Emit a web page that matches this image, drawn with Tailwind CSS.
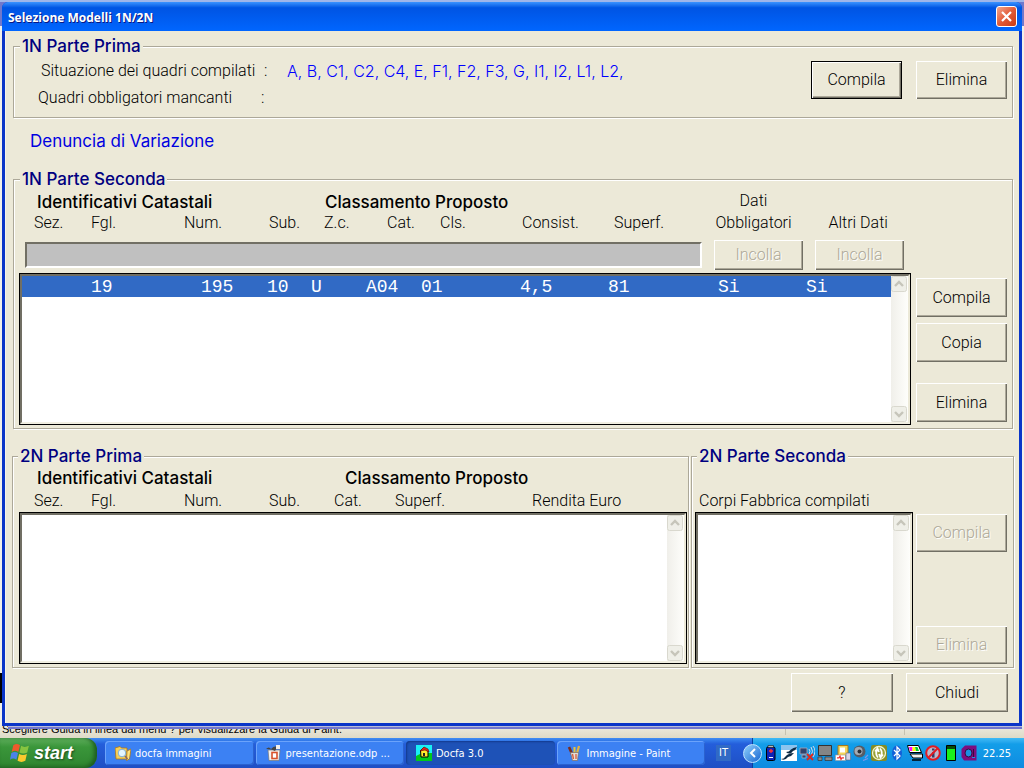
<!DOCTYPE html>
<html lang="it">
<head>
<meta charset="utf-8">
<title>Selezione Modelli 1N/2N</title>
<script src="https://cdn.jsdelivr.net/npm/@tailwindcss/browser@4"></script>
</head>
<body class="h-screen flex flex-col overflow-hidden bg-[#ece9d8] font-['Roboto','Liberation_Sans',sans-serif] font-light text-base leading-5 text-black">

<svg class="hidden" aria-hidden="true">
  <symbol id="up" viewBox="0 0 16 16"><rect x=".5" y=".5" width="15" height="15" rx="2" fill="#efefe8" stroke="#d9d8ce"/><path d="M4 10l4-4 4 4" fill="none" stroke="#c6c5ba" stroke-width="2.4"/></symbol>
  <symbol id="down" viewBox="0 0 16 16"><rect x=".5" y=".5" width="15" height="15" rx="2" fill="#efefe8" stroke="#d9d8ce"/><path d="M4 6l4 4 4-4" fill="none" stroke="#c6c5ba" stroke-width="2.4"/></symbol>
</svg>

<main class="relative flex-1 min-h-0 flex flex-col px-0.5 pt-0.5 pb-3">
  <!-- Paint window behind the dialog -->
  <div class="absolute inset-x-0 top-0 h-[26px] bg-[#7078cc] border-t-2 border-[#9fb5e9]"></div>
  <div class="absolute inset-x-0 top-[26px] bottom-0 bg-[#f1f0ea]"></div>
  <div class="absolute left-0 top-[673px] w-0.5 h-[30px] bg-black"></div>
  <div class="absolute inset-x-0 bottom-0 h-[15px] overflow-hidden bg-linear-to-b from-[#f1efe4] to-[#dedac6] flex items-start">
    <span class="font-['Liberation_Sans',sans-serif] font-normal text-[11px] leading-[13px] pl-0.5 whitespace-nowrap">Scegliere Guida in linea dal menu ? per visualizzare la Guida di Paint.</span>
    <span class="absolute right-[238px] top-0 h-3 w-px bg-[#c5c2b0]"></span>
    <span class="absolute right-[119px] top-0 h-3 w-px bg-[#c5c2b0]"></span>
  </div>
  <div class="absolute left-2 right-0.5 bottom-[9px] h-[3px] bg-[#7176cf] border-t border-[#b9bbd8]"></div>

  <!-- Dialog -->
  <section class="relative flex-1 min-h-0 flex flex-col rounded-t-md overflow-hidden bg-[#0a35c8]" aria-labelledby="ttl">
    <header class="h-[29px] flex-none flex items-center justify-between pl-1.5 pr-[5px] bg-linear-to-b from-[#3a93ff] via-[#0054e3] via-20% to-[#0066ff]">
      <h1 id="ttl" class="pt-0.5 font-['Open_Sans','Noto_Sans',sans-serif] font-bold text-[12px] text-white [text-shadow:1px_1px_#0a1883]">Selezione Modelli 1N/2N</h1>
      <button aria-label="Chiudi finestra" class="size-[21px] rounded-[3px] border border-white bg-linear-to-br from-[#f0a58c] via-[#e25a36] to-[#c93a12] flex items-center justify-center">
        <svg class="size-[13px]" viewBox="0 0 13 13"><path d="M2 2l9 9M11 2l-9 9" stroke="#fff" stroke-width="2.2"/></svg>
      </button>
    </header>

    <div class="flex-1 min-h-0 mx-[3px] mb-[3px] bg-[#ece9d8] border-l border-[#f6f4ea] pl-[6px] pr-[5px] pt-[5px] flex flex-col">

      <fieldset class="min-w-0 ml-px mr-px h-[82px] border border-[#aca899] shadow-[1px_1px_#fff,inset_1px_1px_#fff]">
        <legend class="ml-1.5 px-0.5 bg-[#ece9d8] font-['Inter','Liberation_Sans',sans-serif] text-[17px] leading-5 font-medium text-[#000080]">1N Parte Prima</legend>
        <div class="flex pt-[5px] pr-[5px] gap-[14px]">
          <dl class="flex-1">
            <div class="flex h-[27px] pl-[27px] items-start">
              <dt class="w-[223px]">Situazione dei quadri compilati</dt><dd class="w-[23px]">:</dd><dd class="font-['Inter','Liberation_Sans',sans-serif] text-[#0000ff]">A, B, C1, C2, C4, E, F1, F2, F3, G, I1, I2, L1, L2,</dd>
            </div>
            <div class="flex h-[26px] pl-6 items-start">
              <dt class="w-[223px]">Quadri obbligatori mancanti</dt><dd>:</dd>
            </div>
          </dl>
          <button class="w-[91px] h-[38px] border border-black shadow-[inset_1px_1px_#fff,inset_-1px_-1px_#716f64,inset_-2px_-2px_#aca899]">Compila</button>
          <button class="w-[91px] h-[38px] shadow-[inset_1px_1px_#fff,inset_-1px_-1px_#716f64,inset_-2px_-2px_#aca899]">Elimina</button>
        </div>
      </fieldset>

      <h2 class="mt-[13px] ml-[18px] font-['Inter','Liberation_Sans',sans-serif] text-[17px] leading-5 font-normal text-[#0000e0]">Denuncia di Variazione</h2>

      <fieldset class="min-w-0 mt-[18px] mx-px h-[260px] border border-[#aca899] shadow-[1px_1px_#fff,inset_1px_1px_#fff]">
        <legend class="ml-1.5 px-0.5 bg-[#ece9d8] font-['Inter','Liberation_Sans',sans-serif] text-[17px] leading-5 font-medium text-[#000080]">1N Parte Seconda</legend>
        <div class="flex pl-[5px] pr-[5px] gap-[5px]">
          <div class="flex-1 min-w-0">
            <div class="flex">
              <div class="w-[691px] pt-[3px]">
                <div class="flex pl-[18px] font-['Inter','Liberation_Sans',sans-serif] text-[17px] leading-5 font-medium"><h3 class="w-[288px]">Identificativi Catastali</h3><h3>Classamento Proposto</h3></div>
                <div class="grid grid-cols-[57px_93px_85px_55px_63px_53px_82px_92px_60px] pl-[15px] mt-px">
                  <span>Sez.</span><span>Fgl.</span><span>Num.</span><span>Sub.</span><span>Z.c.</span><span>Cat.</span><span>Cls.</span><span>Consist.</span><span>Superf.</span>
                </div>
              </div>
              <div class="w-[92px] text-center leading-[22px] pt-px">Dati<br>Obbligatori</div>
              <div class="w-[112px] text-center leading-[22px] pt-[23px] pl-1.5">Altri Dati</div>
            </div>
            <div class="flex items-center h-[30px] mt-1.5 pl-[6px] pr-[7px] gap-3">
              <input aria-label="Riga copiata" disabled class="flex-1 min-w-0 h-[26px] bg-[#c0c0c0] border-2 border-t-[#716f64] border-l-[#716f64] border-r-white border-b-white">
              <button disabled class="w-[89px] h-[30px] text-[#aca899] [text-shadow:1px_1px_#fff] shadow-[inset_1px_1px_#fff,inset_-1px_-1px_#716f64,inset_-2px_-2px_#aca899]">Incolla</button>
              <button disabled class="w-[89px] h-[30px] text-[#aca899] [text-shadow:1px_1px_#fff] shadow-[inset_1px_1px_#fff,inset_-1px_-1px_#716f64,inset_-2px_-2px_#aca899]">Incolla</button>
            </div>
            <div class="mt-[3px] h-[152px] border border-black bg-white">
              <div class="h-full flex border-2 border-t-[#716f64] border-l-[#716f64] border-r-[#ece9d8] border-b-[#f1efe2]">
                <div role="listbox" aria-label="Unità 1N" class="flex-1 min-w-0">
                  <div role="option" aria-selected="true" class="grid grid-cols-[110px_66px_44px_55px_55px_99px_88px_110px_88px_30px] h-[21px] pl-[69px] bg-[#316ac5] text-white font-['Liberation_Mono',monospace] font-normal text-[18px] leading-[23px]">
                    <span>19</span><span>195</span><span>10</span><span>U</span><span>A04</span><span>01</span><span>4,5</span><span>81</span><span>Si</span><span>Si</span>
                  </div>
                </div>
                <div class="w-[17px] flex flex-col justify-between bg-linear-to-r from-[#f0efea] to-[#fefefb]">
                  <svg class="size-4"><use href="#up"/></svg><svg class="size-4"><use href="#down"/></svg>
                </div>
              </div>
            </div>
          </div>
          <div class="flex flex-col pt-[89px] gap-1.5">
            <button class="w-[91px] h-[39px] shadow-[inset_1px_1px_#fff,inset_-1px_-1px_#716f64,inset_-2px_-2px_#aca899]">Compila</button>
            <button class="w-[91px] h-[39px] shadow-[inset_1px_1px_#fff,inset_-1px_-1px_#716f64,inset_-2px_-2px_#aca899]">Copia</button>
            <button class="w-[91px] h-[39px] mt-[15px] shadow-[inset_1px_1px_#fff,inset_-1px_-1px_#716f64,inset_-2px_-2px_#aca899]">Elimina</button>
          </div>
        </div>
      </fieldset>

      <div class="flex mt-[17px] gap-0.5">
        <fieldset class="flex-1 min-w-0 h-[222px] border border-[#aca899] shadow-[1px_1px_#fff,inset_1px_1px_#fff]">
          <legend class="ml-[5px] px-0.5 bg-[#ece9d8] font-['Inter','Liberation_Sans',sans-serif] text-[17px] leading-5 font-medium text-[#000080]">2N Parte Prima</legend>
          <div class="pl-1.5 pr-px">
            <div class="flex pl-[18px] pt-0.5 font-['Inter','Liberation_Sans',sans-serif] text-[17px] leading-5 font-medium"><h3 class="w-[308px]">Identificativi Catastali</h3><h3>Classamento Proposto</h3></div>
            <div class="grid grid-cols-[57px_93px_85px_65px_61px_137px_120px] pl-[15px] mt-[3px]">
              <span>Sez.</span><span>Fgl.</span><span>Num.</span><span>Sub.</span><span>Cat.</span><span>Superf.</span><span>Rendita Euro</span>
            </div>
            <div class="mt-px h-[152px] border border-black bg-white">
              <div class="h-full flex border-2 border-t-[#716f64] border-l-[#716f64] border-r-[#ece9d8] border-b-[#f1efe2]">
                <div role="listbox" aria-label="Unità 2N" class="flex-1"></div>
                <div class="w-[17px] flex flex-col justify-between bg-linear-to-r from-[#f0efea] to-[#fefefb]">
                  <svg class="size-4"><use href="#up"/></svg><svg class="size-4"><use href="#down"/></svg>
                </div>
              </div>
            </div>
          </div>
        </fieldset>

        <fieldset class="w-[323px] min-w-0 h-[222px] border border-[#aca899] shadow-[1px_1px_#fff,inset_1px_1px_#fff]">
          <legend class="ml-[5px] px-0.5 bg-[#ece9d8] font-['Inter','Liberation_Sans',sans-serif] text-[17px] leading-5 font-medium text-[#000080]">2N Parte Seconda</legend>
          <div class="flex pl-[3px] pr-1.5 pt-[25px] gap-[3px]">
            <div class="flex-1 min-w-0">
              <h3 class="pl-1">Corpi Fabbrica compilati</h3>
              <div class="mt-px h-[152px] border border-black bg-white">
                <div class="h-full flex border-2 border-t-[#716f64] border-l-[#716f64] border-r-[#ece9d8] border-b-[#f1efe2]">
                  <div role="listbox" aria-label="Corpi Fabbrica compilati" class="flex-1"></div>
                  <div class="w-[17px] flex flex-col justify-between bg-linear-to-r from-[#f0efea] to-[#fefefb]">
                    <svg class="size-4"><use href="#up"/></svg><svg class="size-4"><use href="#down"/></svg>
                  </div>
                </div>
              </div>
            </div>
            <div class="flex flex-col justify-between pt-[23px]">
              <button disabled class="w-[91px] h-[38px] text-[#aca899] [text-shadow:1px_1px_#fff] shadow-[inset_1px_1px_#fff,inset_-1px_-1px_#716f64,inset_-2px_-2px_#aca899]">Compila</button>
              <button disabled class="w-[91px] h-[38px] text-[#aca899] [text-shadow:1px_1px_#fff] shadow-[inset_1px_1px_#fff,inset_-1px_-1px_#716f64,inset_-2px_-2px_#aca899]">Elimina</button>
            </div>
          </div>
        </fieldset>
      </div>

      <div class="flex justify-end gap-[13px] mt-[5px] pr-1.5">
        <button class="w-[102px] h-[39px] shadow-[inset_1px_1px_#fff,inset_-1px_-1px_#716f64,inset_-2px_-2px_#aca899]">?</button>
        <button class="w-[102px] h-[39px] shadow-[inset_1px_1px_#fff,inset_-1px_-1px_#716f64,inset_-2px_-2px_#aca899]">Chiudi</button>
      </div>
    </div>
  </section>
</main>

<!-- Taskbar -->
<footer class="h-[30px] flex-none flex items-stretch bg-linear-to-b from-[#3f8cf3] via-[#245edb] via-20% to-[#1f4fc4] text-white font-['DejaVu_Sans_Condensed','DejaVu_Sans',sans-serif] font-normal text-[11px] leading-4">
  <button class="w-[97px] flex items-center gap-1 pl-2.5 rounded-r-xl bg-linear-to-b from-[#5eae5c] via-[#3a963a] via-30% to-[#2f8530] shadow-[inset_-3px_-1px_4px_#1d5c1f] font-['Liberation_Sans',sans-serif] font-bold italic text-[18px] [text-shadow:1px_1px_2px_#1d4a1d]">
    <svg class="size-5" viewBox="0 0 18 18"><path d="M3 2q3-2 6 0L7.500 8q-3-2-6 0z" fill="#ee5a2c"/><path d="M10 2.500q3 2 7 0L15.500 8.500q-3.500 2-7 0z" fill="#86c440"/><path d="M1.200 9q3-2 6 0L5.800 15q-3-2-5.800 0z" fill="#4b83e8"/><path d="M8.200 9.800q3.500 2 7 0L13.800 16q-3.500 2-7 0z" fill="#fbc92e"/></svg>
    start
  </button>
  <nav class="flex-1 min-w-0 flex gap-0.5 pl-2 pr-3 pt-[3px] pb-[3px]">
    <button class="flex-1 min-w-0 flex items-center gap-1 pl-2.5 rounded-sm bg-[#3c81f3] shadow-[inset_1px_1px_#6ba3fb,inset_-1px_-1px_#2b62cf]">
      <svg class="size-4" viewBox="0 0 16 16"><path d="M0 3l5-1.500 1.500 1.500H12v11H1z" fill="#f6cf57" stroke="#a8741c" stroke-width=".8"/><path d="M12 6l4-2-1.500 10-3 1.500z" fill="#ffe27a" stroke="#a8741c" stroke-width=".8"/><circle cx="7" cy="8" r="3.800" fill="#e4f6ff" stroke="#7fb0d8"/><path d="M10 11l2.500 3" stroke="#866" stroke-width="1.500"/></svg>
      <span class="pt-0.5">docfa immagini</span>
    </button>
    <button class="flex-1 min-w-0 flex items-center gap-1 pl-2.5 rounded-sm bg-[#3c81f3] shadow-[inset_1px_1px_#6ba3fb,inset_-1px_-1px_#2b62cf]">
      <svg class="size-4" viewBox="0 0 16 16"><path d="M2 5h12l-1 10.500H3z" fill="#f4f2ee" stroke="#777" stroke-width=".7"/><path d="M0 4q3-3 5 0 3-4 9-2-3 0-5 4-3-2-9-2z" fill="#444"/><rect x="6" y="7.500" width="5" height="6" fill="#fff" stroke="#d8512b" stroke-width="1.600"/><path d="M10 0h4v4h-4z" fill="#f0eeea"/></svg>
      <span class="pt-0.5">presentazione.odp ...</span>
    </button>
    <button class="flex-1 min-w-0 flex items-center gap-1 pl-2.5 rounded-sm bg-[#1e52b7] shadow-[inset_1px_1px_2px_#143a8c]">
      <svg class="size-4" viewBox="0 0 16 16"><path d="M0 0h16v16H0z" fill="#19f0f5"/><path d="M0 11l6-3 10 0v8H0z" fill="#00c91c"/><path d="M4.500 5.500L8 3l4 3v6H5z" fill="#ffe92b" stroke="#000"/><path d="M4 6l4-4 4 2 1 3-4-2z" fill="#e0281c" stroke="#600" stroke-width=".6"/><path d="M7 8h2v3H7z" fill="#222"/></svg>
      <span class="pt-0.5">Docfa 3.0</span>
    </button>
    <button class="flex-1 min-w-0 flex items-center gap-1 pl-2.5 rounded-sm bg-[#3c81f3] shadow-[inset_1px_1px_#6ba3fb,inset_-1px_-1px_#2b62cf]">
      <svg class="size-4" viewBox="0 0 16 16"><path d="M2 2l3.500 8" stroke="#7c2d20" stroke-width="2.600"/><path d="M7.500 2v8" stroke="#e8c43a" stroke-width="2"/><path d="M12 1l-2.500 9" stroke="#e7b23c" stroke-width="2.200"/><path d="M3.500 7.500h8l-1 8h-5z" fill="#e4e0da" stroke="#7c6c60" stroke-width=".7"/><path d="M5.500 9l1 5M9 9v5" stroke="#d85a3c" stroke-width="1.300"/></svg>
      <span class="pt-0.5">Immagine - Paint</span>
    </button>
  </nav>
  <div class="w-[35px] flex items-center"><span class="h-4 px-[3px] -ml-px bg-[#316ac5]">IT</span></div>
  <div class="relative w-[272px] flex items-center pl-[10px] bg-linear-to-b from-[#3fbaf5] via-[#139ee9] via-20% to-[#0f8be0] border-l border-[#0b3f9e]">
    <button aria-label="Mostra icone nascoste" class="absolute -left-2.5 size-[19px] rounded-full bg-linear-to-br from-[#8fd0fb] to-[#1565d0] border border-[#bfe3ff] flex items-center justify-center"><svg class="size-2.5" viewBox="0 0 10 10"><path d="M7 1L3 5l4 4" fill="none" stroke="#fff" stroke-width="2"/></svg></button>
    <div class="flex items-center gap-0.5">
      <svg class="size-4" viewBox="0 0 16 16"><rect x="3.500" y="2" width="8.500" height="13.500" rx="1.500" fill="#0b22b8" stroke="#000"/><path d="M5 .5h5.500v2H5z" fill="#bbb" stroke="#000" stroke-width=".5"/><path d="M6 6h4M8 4v4" stroke="#f33" stroke-width="1.300"/><path d="M6 12.500h4" stroke="#fff"/></svg>
      <svg class="size-4" viewBox="0 0 16 16"><path d="M0 0h16v16H0z" fill="#fff"/><path d="M0 0h16v5H0z" fill="#8cc4ee"/><path d="M5 7q3 0 5-2.500Q12 2.500 16 2q-1 3-4 4-3 4.500-7 1zM0 14q3 0 4.500-2.500Q7 8 13 8q-2 3-6 4-3 4-7 2z" fill="#0d2b45"/></svg>
      <svg class="size-4" viewBox="0 0 16 16"><path d="M1 3h7v6H1zM3 10h4v3H3z" fill="#32446e" stroke="#aab" stroke-width=".8"/><path d="M10 4q2 2 0 5M12 2q3 4 0 9M14 1q4 5 0 11" fill="none" stroke="#d6dbe8"/><path d="M8 9l6 6M14 9l-6 6" stroke="#e3261a" stroke-width="1.800"/></svg>
      <svg class="size-4" viewBox="0 0 16 16"><path d="M1.500 .5h13v10h-13z" fill="#858585" stroke="#333"/><path d="M1 12h4v3.500H1zM8 12h7v3.500H8z" fill="#8b8b8b" stroke="#333" stroke-width=".7"/></svg>
      <svg class="size-4" viewBox="0 0 16 16"><path d="M3 .5h10v10H3z" fill="#f5d55b" stroke="#a8791c"/><path d="M5 2.500h5v5H5z" fill="#fff"/><path d="M.5 10h10v5.500H.5z" fill="#fff" stroke="#999" stroke-width=".6"/><path d="M2 12.800h2l1-1.500 1 3 1-1.500h2" fill="none" stroke="#e33" stroke-width="1.300"/><path d="M11 8h4.500v7H11z" fill="#d7d4e6" stroke="#667" stroke-width=".6"/></svg>
      <svg class="size-4" viewBox="0 0 16 16"><circle cx="6.500" cy="6.500" r="6" fill="#555c66"/><circle cx="5.500" cy="6" r="4" fill="#a5abb3"/><circle cx="6.500" cy="6.500" r="2" fill="#2b2f36"/><path d="M12 13l3-3M10 15.500l5-2" stroke="#7f97e8" stroke-width="1.200"/></svg>
      <svg class="size-4" viewBox="0 0 16 16"><rect width="16" height="16" rx="2" fill="#868c24"/><circle cx="8" cy="8" r="6.500" fill="#99a035" stroke="#f4f3cf" stroke-width="1.300"/><path d="M7 12.500Q4 9 6 5M4 6.500L6.500 3.500 8 7M9 3.500q3 3.500 1 7.500M8 9l1.500 3.500L12 9.500" fill="none" stroke="#fff" stroke-width="1.800"/></svg>
      <svg class="size-4" viewBox="0 0 16 16"><ellipse cx="8" cy="8" rx="5" ry="7.500" fill="#1360d8"/><path d="M5 5l6 6-3 3V2l3 3-6 6" fill="none" stroke="#fff" stroke-width="1.200"/></svg>
      <svg class="size-4" viewBox="0 0 16 16"><path d="M.5 .5h11l3 7h-12z" fill="#fff" stroke="#000"/><path d="M2 2h3.500v4H3z" fill="#f0f"/><path d="M5.500 2H8l1 4H5.500z" fill="#ff0"/><path d="M8 2h2.500l1.500 4H9z" fill="#0c3"/><path d="M3 9h12.500v4H6z" fill="#eee" stroke="#000"/><path d="M5 15h9" stroke="#000" stroke-width="1.500"/></svg>
      <svg class="size-4" viewBox="0 0 16 16"><circle cx="8" cy="8" r="6.800" fill="#b9b9cc" stroke="#e01c24" stroke-width="2"/><path d="M7 7h2.500v5.500H7zM7 3.500h2.500v2H7z" fill="#3a3a66"/><path d="M3.500 12.500l9-9" stroke="#e01c24" stroke-width="2"/></svg>
      <svg class="size-4" viewBox="0 0 16 16"><path d="M3.500 .5h9v15h-9z" fill="#1bf01b" stroke="#000"/><path d="M4 1h8v3H4z" fill="#084a08"/></svg>
      <svg class="size-4" viewBox="0 0 16 16"><path d="M4 .5h11.500v15H3L.5 12V4z" fill="#7d0d7f"/><ellipse cx="7.500" cy="8" rx="3.500" ry="4" fill="#1a8fe3" stroke="#3c063e"/><path d="M12.500 4v8" stroke="#3c063e"/><path d="M11 12.500h3" stroke="#1a8fe3"/></svg>
    </div>
    <time class="ml-auto pr-[13px] pt-0.5">22.25</time>
  </div>
</footer>
</body>
</html>
